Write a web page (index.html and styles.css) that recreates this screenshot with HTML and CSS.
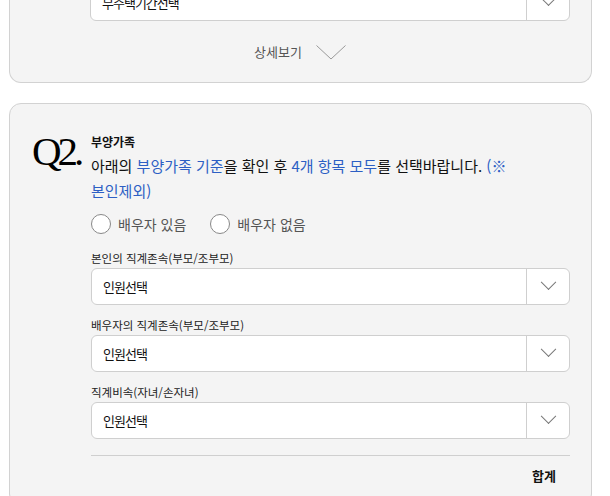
FILE: index.html
```html
<!DOCTYPE html>
<html lang="ko">
<head>
    <meta charset="UTF-8">
    <title>부양가족 선택</title>
    <link rel="stylesheet" href="styles.css">
</head>
<body>

<div id="page">

    <!--Q1 card, scrolled so only its bottom is visible-->
    <div class="card cardTop">
        <div class="selectBox">
            <span class="selectText">무주택기간선택</span>
            <span class="selectArrow"><span class="chev"></span></span>
        </div>
        <div class="moreRow">
            상세보기
            <svg class="moreChev" width="30" height="15" viewBox="0 0 30 15">
                <polyline points="0.5,0.5 15,14 29.5,0.5" fill="none" stroke="#999" stroke-width="1"/>
            </svg>
        </div>
    </div>

    <!--Q2 card-->
    <div class="card">
        <div class="qRow">
            <div class="qNum">Q2.</div>
            <div class="qBody">
                <div class="qTitle">부양가족</div>
                <p class="qDesc">아래의 <span class="blue">부양가족 기준</span>을 확인 후 <span class="blue">4개 항목 모두</span>를 선택바랍니다. <span class="blue">(※ 본인제외)</span></p>

                <div class="radioRow">
                    <label class="radio"><span class="circle"></span>배우자 있음</label>
                    <label class="radio"><span class="circle"></span>배우자 없음</label>
                </div>

                <div class="fieldLabel">본인의 직계존속(부모/조부모)</div>
                <div class="selectBox">
                    <span class="selectText">인원선택</span>
                    <span class="selectArrow"><span class="chev"></span></span>
                </div>

                <div class="fieldLabel">배우자의 직계존속(부모/조부모)</div>
                <div class="selectBox">
                    <span class="selectText">인원선택</span>
                    <span class="selectArrow"><span class="chev"></span></span>
                </div>

                <div class="fieldLabel">직계비속(자녀/손자녀)</div>
                <div class="selectBox">
                    <span class="selectText">인원선택</span>
                    <span class="selectArrow"><span class="chev"></span></span>
                </div>

                <div class="totalRow">합계</div>
            </div>
        </div>
    </div>

</div>

</body>
</html>
```

FILE: styles.css
```css
/*whole page*/
body {
    margin: 0;
    background-color: #ffffff;
    font-family: "Noto Sans CJK KR", "Noto Sans", sans-serif;
    color: #111;
}

#page {
    padding: 0 18px 0 9px;
    margin-top: -16px;
}

/*grey rounded cards*/
.card {
    background-color: #f4f4f4;
    border: 1px solid #d2d2d2;
    border-radius: 12px;
    padding: 29px 21px 0 22px;
    margin-bottom: 20px;
}

.cardTop {
    border-top: none;
    border-top-left-radius: 0;
    border-top-right-radius: 0;
    padding: 0 21px 0 80px;
}

/*select boxes*/
.selectBox {
    display: flex;
    height: 35px;
    background-color: #fff;
    border: 1px solid #cfcfcf;
    border-radius: 6px;
    margin-bottom: 11px;
}

.cardTop .selectBox {
    border-top-left-radius: 0;
    border-top-right-radius: 0;
    margin-bottom: 0;
}

.selectText {
    flex: 1;
    padding-left: 11px;
    font-size: 13px;
    letter-spacing: -1px;
    line-height: 36px;
    color: #111;
}

.selectArrow {
    width: 42px;
    border-left: 1px solid #cfcfcf;
    display: flex;
    align-items: center;
    justify-content: center;
}

.chev {
    width: 10px;
    height: 10px;
    border-right: 1px solid #777;
    border-bottom: 1px solid #777;
    transform: rotate(45deg) translate(-3px, -3px);
}

/*detail toggle under Q1*/
.moreRow {
    display: flex;
    justify-content: center;
    align-items: center;
    gap: 14px;
    height: 61px;
    margin-left: -60px;
    font-size: 13px;
    color: #555;
}

.moreChev {
    margin-top: 2px;
}

/*Q2 layout*/
.qRow {
    display: flex;
}

.qNum {
    width: 59px;
    flex-shrink: 0;
    margin-top: -2px;
    font-family: "Liberation Serif", serif;
    font-size: 41px;
    line-height: 40px;
    letter-spacing: -4px;
    color: #000;
}

.qBody {
    flex: 1;
}

.qTitle {
    font-size: 12px;
    font-weight: bold;
    line-height: 18px;
}

.qDesc {
    margin: 2px 0 0 0;
    font-size: 15px;
    line-height: 25px;
    color: #111;
    word-break: keep-all;
}

.blue {
    color: #2d5fc4;
}

.radioRow {
    display: flex;
    gap: 24px;
    margin-top: 11px;
    height: 20px;
    margin-bottom: 15px;
}

.radio {
    display: flex;
    align-items: center;
    gap: 7px;
    font-size: 14px;
    color: #555;
}

.circle {
    width: 18px;
    height: 18px;
    border: 1px solid #888;
    border-radius: 50%;
    background-color: #fff;
}

.fieldLabel {
    font-size: 11.5px;
    line-height: 18px;
    margin-bottom: 1px;
    color: #222;
}

.totalRow {
    border-top: 1px solid #cfcfcf;
    margin-top: 16px;
    padding: 9px 14px 0 0;
    text-align: right;
    font-size: 13px;
    font-weight: bold;
    line-height: 22px;
    height: 40px;
}
```
